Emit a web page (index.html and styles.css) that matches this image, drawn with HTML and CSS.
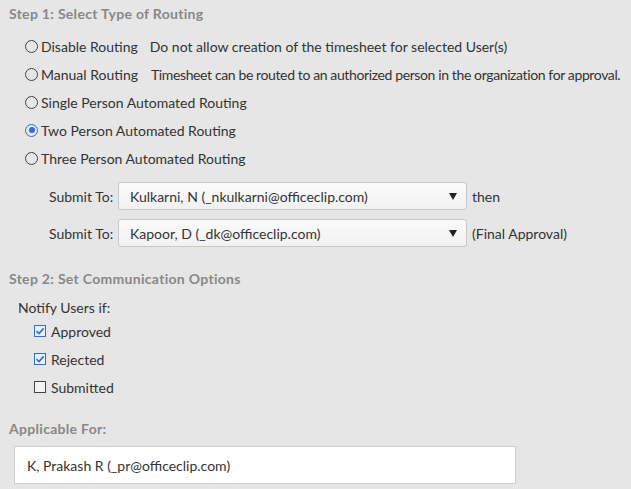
FILE: index.html
```html
<!DOCTYPE html>
<html>
<head>
<meta charset="utf-8">
<link rel="stylesheet" href="styles.css">
</head>
<body>
<div class="page">
  <div class="heading">Step 1: Select Type of Routing</div>
  <div class="options">
    <div class="opt"><span class="radio"></span><span class="label">Disable Routing</span><span class="desc">Do not allow creation of the timesheet for selected User(s)</span></div>
    <div class="opt"><span class="radio"></span><span class="label">Manual Routing</span><span class="desc tight">Timesheet can be routed to an authorized person in the organization for approval.</span></div>
    <div class="opt"><span class="radio"></span><span class="label">Single Person Automated Routing</span></div>
    <div class="opt"><span class="radio checked"></span><span class="label">Two Person Automated Routing</span></div>
    <div class="opt"><span class="radio"></span><span class="label">Three Person Automated Routing</span></div>
  </div>
  <div class="submits">
    <div class="submit-row">
      <span class="submit-label">Submit To:</span>
      <div class="select"><span>Kulkarni, N (_nkulkarni@officeclip.com)</span><span class="arrow"></span></div>
      <span class="after">then</span>
    </div>
    <div class="submit-row">
      <span class="submit-label">Submit To:</span>
      <div class="select"><span>Kapoor, D (_dk@officeclip.com)</span><span class="arrow"></span></div>
      <span class="after">(Final Approval)</span>
    </div>
  </div>
  <div class="heading h2">Step 2: Set Communication Options</div>
  <div class="notify">Notify Users if:</div>
  <div class="checks">
    <div class="chk"><span class="box checked"><svg width="10" height="10" viewBox="0 0 10 10"><path d="M1.5 5.2 L4 7.6 L8.6 2.4" fill="none" stroke="#2d6fd9" stroke-width="1.6"/></svg></span><span>Approved</span></div>
    <div class="chk"><span class="box checked"><svg width="10" height="10" viewBox="0 0 10 10"><path d="M1.5 5.2 L4 7.6 L8.6 2.4" fill="none" stroke="#2d6fd9" stroke-width="1.6"/></svg></span><span>Rejected</span></div>
    <div class="chk"><span class="box"></span><span>Submitted</span></div>
  </div>
  <div class="heading h3">Applicable For:</div>
  <div class="applicable">K, Prakash R (_pr@officeclip.com)</div>
</div>
</body>
</html>
```
FILE: styles.css
```css
html, body {
  margin: 0;
  padding: 0;
  background: #e6e6e6;
}
body {
  font-family: "Lato", "Noto Sans", sans-serif;
  font-size: 14px;
  color: #333;
  white-space: nowrap;
}
.page {
  display: flex;
  flex-direction: column;
  width: 631px;
  height: 489px;
  overflow: hidden;
}
.heading {
  height: 20px;
  line-height: 20px;
  margin-top: 4px;
  padding-left: 9px;
  font-weight: bold;
  letter-spacing: 0.3px;
  color: #888;
}
.options {
  display: flex;
  flex-direction: column;
  margin-top: 8px;
  padding-left: 25px;
}
.opt {
  height: 28px;
  display: flex;
  align-items: center;
}
.opt > span {
  flex-shrink: 0;
}
.radio {
  width: 11px;
  height: 11px;
  border: 1px solid #444;
  border-radius: 50%;
  margin-right: 3px;
  box-sizing: content-box;
  position: relative;
  background: transparent;
}
.radio.checked {
  border-color: #2d6fd9;
}
.radio.checked::after {
  content: "";
  position: absolute;
  left: 2.5px;
  top: 2.5px;
  width: 6px;
  height: 6px;
  border-radius: 50%;
  background: #2d6fd9;
}
.desc {
  margin-left: 12px;
}
.desc.tight {
  margin-left: 13px;
  letter-spacing: -0.38px;
}
.submits {
  display: flex;
  flex-direction: column;
  gap: 9px;
  margin-top: 10px;
  padding-left: 49px;
}
.submit-row {
  display: flex;
  align-items: center;
  height: 28px;
}
.submit-label {
  width: 69px;
}
.select {
  width: 349px;
  height: 28px;
  box-sizing: border-box;
  border: 1px solid #c9c9c9;
  border-radius: 3px;
  background: linear-gradient(#fbfbfb, #f1f1f1);
  display: flex;
  align-items: center;
  justify-content: space-between;
  padding: 0 8px 0 11px;
}
.arrow {
  width: 0;
  height: 0;
  border-left: 4px solid transparent;
  border-right: 4px solid transparent;
  border-top: 7px solid #222;
  margin-right: 1px;
}
.after {
  margin-left: 5px;
}
.h2 {
  margin-top: 22px;
}
.notify {
  height: 20px;
  line-height: 20px;
  margin-top: 9px;
  padding-left: 18px;
}
.checks {
  display: flex;
  flex-direction: column;
  padding-left: 34px;
  margin-top: -1px;
}
.chk {
  height: 28px;
  display: flex;
  align-items: center;
}
.box {
  width: 10px;
  height: 10px;
  border: 1px solid #444;
  margin-right: 5px;
  display: flex;
  align-items: center;
  justify-content: center;
  background: #f4f4f4;
}
.box.checked {
  border-color: #2d6fd9;
  background: #eaf1fc;
}
.h3 {
  margin-top: 18px;
}
.applicable {
  margin: 7px 0 0 14px;
  width: 502px;
  height: 38px;
  box-sizing: border-box;
  border: 1px solid #cfcfcf;
  background: #fff;
  display: flex;
  align-items: center;
  padding-left: 12px;
}
```
